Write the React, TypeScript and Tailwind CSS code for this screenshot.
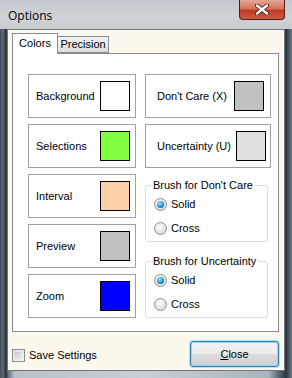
import { useState } from "react";

const FONT = { fontFamily: '"Liberation Sans", Arial, sans-serif' };

type Swatch = { label: string; color: string };

const LEFT: Swatch[] = [
  { label: "Background", color: "bg-[#ffffff]" },
  { label: "Selections", color: "bg-[#80ff40]" },
  { label: "Interval", color: "bg-[#ffd0a8]" },
  { label: "Preview", color: "bg-[#c0c0c0]" },
  { label: "Zoom", color: "bg-[#0000ff]" },
];

function ColorBox({ label, color, className }: Swatch & { className: string }) {
  return (
    <div
      className={`h-[44px] border border-[#a0a0a0] bg-white flex items-center justify-between ${className}`}
    >
      <span className="text-[11px] text-black">{label}</span>
      <div className={`w-[30px] h-[30px] border border-black ${color}`} />
    </div>
  );
}

function Radio({ checked, label }: { checked: boolean; label: string }) {
  return (
    <div className="flex items-center h-[24px] gap-[4px]">
      <div className="w-[13px] h-[13px] rounded-full border border-[#8f8f8f] bg-[radial-gradient(circle_at_40%_35%,#ffffff,#e2e2e2_60%,#cfcfcf)] flex items-center justify-center">
        {checked && (
          <div className="w-[7px] h-[7px] rounded-full bg-[radial-gradient(circle_at_40%_35%,#a8e2ff,#1c8fd8_55%,#0c4f8c)]" />
        )}
      </div>
      <span className="text-[11px] text-black">{label}</span>
    </div>
  );
}

function BrushGroup({ title }: { title: string }) {
  return (
    <div className="relative w-[123px] h-[57px] border border-[#d5dfe5] rounded-[3px] pl-[8px] pt-[6px]">
      <span className="absolute -top-[7px] left-[5px] px-[2px] bg-white text-[11px] leading-[13px] text-black">
        {title}
      </span>
      <Radio checked label="Solid" />
      <Radio checked={false} label="Cross" />
    </div>
  );
}

export default function App() {
  const [save, setSave] = useState(false);
  return (
    <div
      className="w-[292px] h-[378px] flex flex-col bg-[linear-gradient(to_right,#3e4a56,#5f6b77_1%,#26303a_2%,#6c7884_3%,#b9c1c8_5%,#c9ced3_50%,#aab3bb_92%,#4d5a66_96%,#2c3640_98%,#6f7b86)]"
      style={FONT}
    >
      {/* title bar */}
      <div className="h-[29px] flex items-start justify-between bg-[linear-gradient(to_bottom,#c3c9ce,#cfd3d7_60%,#c6cbd0)]">
        <span
          className="pl-[8px] pt-[7px] text-[12px] text-black"
          style={{ fontFamily: '"Open Sans", "Noto Sans", sans-serif' }}
        >
          Options
        </span>
        <div className="mr-[7px] w-[46px] h-[20px] rounded-b-[4px] border border-t-0 border-[#5a1a12] bg-[linear-gradient(to_bottom,#e3a797,#d3735e_45%,#bf3b24_55%,#cc5b40)] flex items-center justify-center">
          <svg width="14" height="11" viewBox="0 0 14 11">
            <path
              d="M2 1.5 L12 9.5 M12 1.5 L2 9.5"
              stroke="#3b1a14"
              strokeWidth="4"
              strokeLinecap="round"
            />
            <path
              d="M2 1.5 L12 9.5 M12 1.5 L2 9.5"
              stroke="#ffffff"
              strokeWidth="2.4"
              strokeLinecap="round"
            />
          </svg>
        </div>
      </div>

      {/* client area */}
      <div className="mx-[7px] h-[342px] border border-[#6b7680] bg-[#fcf8ee] flex flex-col pl-[4px] pr-[5px] pt-[3px]">
        {/* tabs */}
        <div className="flex items-end h-[21px] relative z-10">
          <div className="w-[46px] h-[21px] border border-b-0 border-[#898c95] bg-white text-[11px] text-black flex items-center justify-center pb-[1px]">
            Colors
          </div>
          <div className="w-[51px] h-[17px] mb-[1px] border border-l-0 border-[#898c95] bg-[linear-gradient(to_bottom,#f3f3f3,#ebebeb_50%,#dcdcdc)] text-[11px] text-black flex items-center justify-center">
            Precision
          </div>
        </div>
        <div className="-mt-[1px] h-[279px] border border-[#898c95] bg-white flex pl-[15px] pt-[20px] gap-[9px]">
          <div className="flex flex-col gap-[6px]">
            {LEFT.map((s) => (
              <ColorBox
                key={s.label}
                {...s}
                className="w-[108px] pl-[7px] pr-[5px]"
              />
            ))}
          </div>
          <div className="flex flex-col">
            <ColorBox
              label="Don't Care (X)"
              color="bg-[#c0c0c0]"
              className="w-[126px] pl-[11px] pr-[6px]"
            />
            <div className="h-[6px]" />
            <ColorBox
              label="Uncertainty (U)"
              color="bg-[#e0e0e0]"
              className="w-[126px] pl-[11px] pr-[4px]"
            />
            <div className="h-[17px]" />
            <BrushGroup title="Brush for Don't Care" />
            <div className="h-[19px]" />
            <BrushGroup title="Brush for Uncertainty" />
          </div>
        </div>

        {/* bottom row */}
        <div className="flex items-center justify-between mt-[9px]">
          <label className="flex items-center gap-[4px] mt-[2px]">
            <span
              onClick={() => setSave(!save)}
              className="w-[13px] h-[13px] border border-[#8f8f8f] bg-[linear-gradient(135deg,#dcdcdc,#f6f6f6)] p-[2px]"
            >
              <span className="block w-full h-full bg-[linear-gradient(135deg,#c8c8c8,#eeeeee)]" />
            </span>
            <span className="text-[11px] text-black">Save Settings</span>
          </label>
          <button className="w-[89px] h-[26px] rounded-[3px] border border-[#3c7fb1] shadow-[inset_0_0_0_1px_#8fd3f5,0_0_1px_1px_#a8def8] bg-[linear-gradient(to_bottom,#f2f2f2,#ebebeb_50%,#dddddd_50%,#cfcfcf)] text-[11px] text-black">
            <span className="underline">C</span>lose
          </button>
        </div>
      </div>
    </div>
  );
}
